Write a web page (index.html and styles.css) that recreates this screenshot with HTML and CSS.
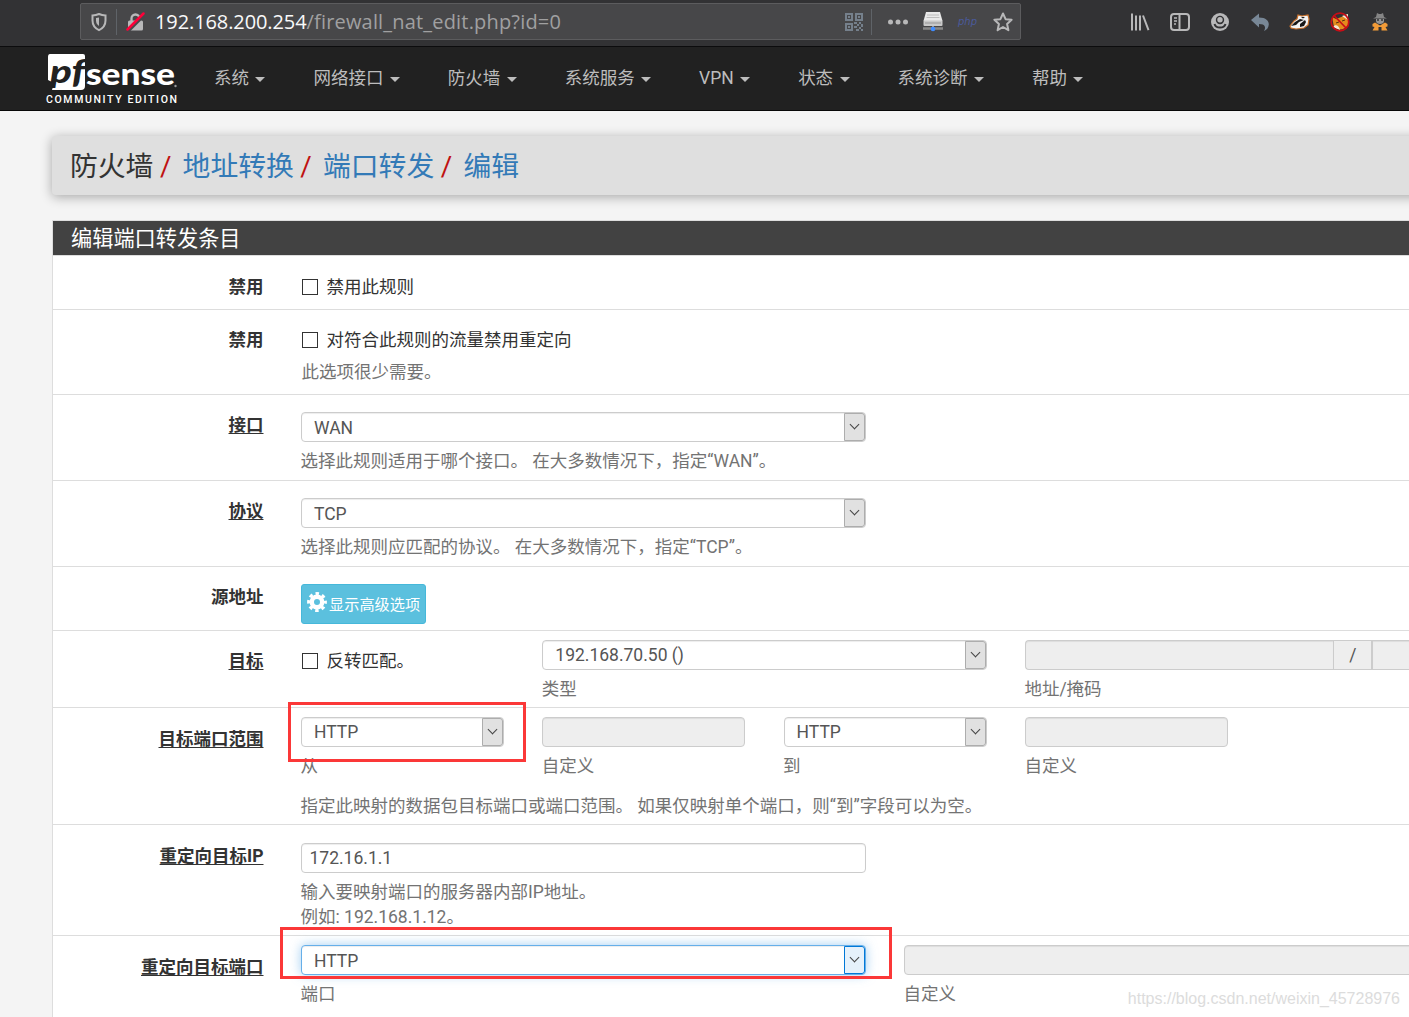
FILE: index.html
```html
<!DOCTYPE html>
<html lang="zh-CN">
  <head>
    <meta charset="UTF-8" />
    <meta name="viewport" content="width=device-width, initial-scale=1.0" />
    <title>防火墙: 地址转换: 端口转发: 编辑</title>
    <link rel="stylesheet" href="styles.css">
  </head>
  <body>
    <!-- Browser toolbar -->
    <div class="toolbar">
      <div class="address-bar">
        <svg class="icon-shield" width="18" height="20" viewBox="0 0 18 20" fill="none" stroke="#b8b8b9" stroke-width="2">
          <path d="M9 2c2 .9 4 1.400 6.500 1.500v5c0 4.500-2 7.500-6.500 9.700C4.500 16 2.500 13 2.500 8.500v-5C5 3.400 7 2.900 9 2z" />
          <path d="M9 5.500v8.500C7 12.500 6 11 6 8.500V6z" fill="#b8b8b9" stroke="none" />
        </svg>
        <span class="divider"></span>
        <svg class="icon-lock" width="19" height="20" viewBox="0 0 19 20">
          <path d="M5.500 9V6.500a4 4 0 0 1 8 0V9" fill="none" stroke="#b8b8b9" stroke-width="2.300" />
          <rect x="2" y="8.500" width="15" height="10" rx="1.500" fill="#b8b8b9" />
          <path d="M1.500 19.500L18.500 2.500" stroke="#474749" stroke-width="3.500" />
          <path d="M1.500 17.500L17.500 1.500" stroke="#ff0039" stroke-width="2.500" stroke-linecap="round" />
        </svg>
        <span class="url"><b>192.168.200.254</b><i>/firewall_nat_edit.php?id=0</i></span>
        <svg class="icon-qr" width="18" height="18" viewBox="0 0 18 18" fill="#75808c">
          <path fill-rule="evenodd" d="M0 0h8v8H0zM2 2v4h4V2zM10 0h8v8h-8zM12 2v4h4V2zM0 10h8v8H0zM2 12v4h4v-4z" />
          <path d="M3 3h2v2H3zM13 3h2v2h-2zM3 13h2v2H3zM9 9h3v2H9zM14 9h2v2h-2zM12 11h2v2h-2zM16 11h2v3h-2zM9 13h3v2H9zM14 14h2v2h-2zM11 16h3v2h-3zM16 16h2v2h-2z" />
        </svg>
        <span class="divider"></span>
        <svg class="icon-more" width="20" height="6" viewBox="0 0 20 6" fill="#b8b8b9">
          <circle cx="2.500" cy="3" r="2.500" /><circle cx="10" cy="3" r="2.500" /><circle cx="17.500" cy="3" r="2.500" />
        </svg>
        <svg class="icon-drive" width="20" height="21" viewBox="0 0 20 21">
          <path d="M3 1h14l2.500 9H.5z" fill="#e9e9e9" />
          <path d="M4 4h12M3.500 6.500h13" stroke="#bcbcbc" />
          <rect x=".5" y="9.500" width="19" height="5.500" rx="1" fill="#c9c9c9" />
          <path d="M2 12h16" stroke="#969696" />
          <path d="M0 17.500h20" stroke="#888" stroke-width="2.500" />
          <path d="M10 15v2" stroke="#999" stroke-width="2" />
          <circle cx="10" cy="18" r="2.300" fill="#3f8cff" />
        </svg>
        <span class="php">php</span>
        <svg class="icon-star" width="20" height="20" viewBox="0 0 20 20" fill="none" stroke="#b8b8b9" stroke-width="2" stroke-linejoin="round">
          <path d="M10 1.500l2.600 5.700 6 .6-4.500 4.200 1.300 6.200-5.400-3.200-5.400 3.200L5.900 12 1.400 7.800l6-.6z" />
        </svg>
      </div>
      <div class="extensions">
        <svg width="20" height="20" viewBox="0 0 20 20" fill="none" stroke="#b8b8b9" stroke-width="2">
          <path d="M2 1.500v17M6 3.500v15M10 3.500v15M13 3.500l5.500 14.700" />
        </svg>
        <svg width="20" height="20" viewBox="0 0 20 20" fill="none" stroke="#b8b8b9" stroke-width="2">
          <rect x="1" y="2" width="18" height="16" rx="3" />
          <path d="M9.500 2v16" />
          <path d="M4 6h3M4 9h3M4 12h2" stroke-width="1.300" />
        </svg>
        <svg width="20" height="20" viewBox="0 0 20 20">
          <circle cx="10" cy="10" r="9" fill="#b8b8b9" />
          <circle cx="10" cy="8" r="4.200" fill="#323234" />
          <circle cx="10" cy="7.800" r="2.700" fill="#b8b8b9" />
          <path d="M4.500 12c1.500 4.800 9.500 4.800 11 0" fill="none" stroke="#323234" stroke-width="2" />
        </svg>
        <svg width="20" height="20" viewBox="0 0 20 20" fill="#788796">
          <path d="M1 8l8-6.500v4c7 0 10 3.500 9.800 7-.2 3.500-2.300 5.500-4.800 6.500 2-3.500 1.500-7-5-7v3.500z" />
        </svg>
        <svg width="22" height="20" viewBox="0 0 22 20">
          <path d="M1 14l4-5 3-2 1-4 4 1 6-1 1 4-1 6-4 3-8 1-5-1z" fill="#f4f4f4" stroke="#c7702b" stroke-width="1.200" />
          <path d="M2 14l4-4 5-3 4 1-5 2-3 3zM11 12l5-4 1 2-2 4-4 1zM12 5l4 0-2 1.500z" fill="#171717" />
        </svg>
        <svg width="20" height="20" viewBox="0 0 20 20">
          <path d="M2 5l4 2 8-3 4-2v11c-3 5-10 6-14 2z" fill="#e48b1d" />
          <path d="M3 15c2-3 6-2 7 3M12 4l6-2v6z" fill="#f5e8d8" />
          <path d="M6 11l3-1M12 9l3-1" stroke="#543011" />
          <circle cx="10" cy="10" r="8.800" fill="none" stroke="#c90d16" stroke-width="1.700" />
          <path d="M4 3.500l12.500 13" stroke="#c90d16" stroke-width="1.700" />
        </svg>
        <svg width="18" height="20" viewBox="0 0 18 20">
          <path d="M5 5l1-4 2 1h2l2-1 1 4 3 1.500H2z" fill="#858585" />
          <path d="M5 7h8v2c0 4-8 4-8 0z" fill="#969696" />
          <path d="M6 8h2M10 8h2" stroke="#333" stroke-width="1.300" />
          <path d="M4 10.500l5 3 5-3 2.500 1.500v2.500L14.500 15l2 3.500H10.500V15h-3v3.500h-6l2-3.500-2-.5V12z" fill="#f29b38" />
        </svg>
      </div>
    </div>

    <!-- Main menu -->
    <nav class="navbar">
      <a class="brand" href="#">
        <svg width="134" height="60" viewBox="0 0 134 60">
          <path d="M6 5h33q2 0 2 2v30q0 4-4 4H8l2-7-6-3V8q0-3 2-3z" fill="#fff" />
          <text class="brand-pf" x="6" y="34" textLength="35" lengthAdjust="spacingAndGlyphs">pf</text>
          <text class="brand-sense" x="42" y="36" textLength="89" lengthAdjust="spacingAndGlyphs">sense</text>
          <circle cx="131.500" cy="37" r="1.200" fill="#999" />
          <text class="brand-edition" x="2" y="54" textLength="131">COMMUNITY EDITION</text>
        </svg>
      </a>
      <ul class="menu">
        <li><a href="#">系统</a></li>
        <li><a href="#">网络接口</a></li>
        <li><a href="#">防火墙</a></li>
        <li><a href="#">系统服务</a></li>
        <li><a href="#">VPN</a></li>
        <li><a href="#">状态</a></li>
        <li><a href="#">系统诊断</a></li>
        <li><a href="#">帮助</a></li>
      </ul>
    </nav>

    <main>
      <ol class="breadcrumb">
        <li>防火墙</li>
        <li><a href="#">地址转换</a></li>
        <li><a href="#">端口转发</a></li>
        <li><a href="#">编辑</a></li>
      </ol>

      <section class="panel">
        <h2>编辑端口转发条目</h2>

        <div class="form-group row-disable">
          <div class="label">禁用</div>
          <div class="field">
            <label class="check"><span class="box"></span>禁用此规则</label>
          </div>
        </div>

        <div class="form-group row-nordr">
          <div class="label">禁用</div>
          <div class="field">
            <label class="check"><span class="box"></span>对符合此规则的流量禁用重定向</label>
            <p class="help indent">此选项很少需要。</p>
          </div>
        </div>

        <div class="form-group row-select">
          <div class="label"><u>接口</u></div>
          <div class="field">
            <div class="select wide">WAN<span class="arrow"></span></div>
            <p class="help">选择此规则适用于哪个接口。 在大多数情况下，指定“WAN”。</p>
          </div>
        </div>

        <div class="form-group row-select">
          <div class="label"><u>协议</u></div>
          <div class="field">
            <div class="select wide">TCP<span class="arrow"></span></div>
            <p class="help">选择此规则应匹配的协议。 在大多数情况下，指定“TCP”。</p>
          </div>
        </div>

        <div class="form-group row-source">
          <div class="label">源地址</div>
          <div class="field">
            <button class="btn-info">
              <svg width="20" height="20" viewBox="0 0 20 20" fill="none" stroke="#fff">
                <circle cx="10" cy="10" r="5.200" stroke-width="4.400" />
                <circle cx="10" cy="10" r="8.300" stroke-width="3.200" stroke-dasharray="3.400 3.118" stroke-dashoffset="1.700" />
              </svg>显示高级选项
            </button>
          </div>
        </div>

        <div class="form-group row-dest">
          <div class="label"><u>目标</u></div>
          <div class="field columns">
            <label class="check"><span class="box"></span>反转匹配。</label>
            <div class="span-2">
              <div class="select">192.168.70.50 ()<span class="arrow"></span></div>
              <p class="help">类型</p>
            </div>
            <div class="span-2">
              <div class="input-group">
                <div class="input disabled"></div>
                <span class="addon">/</span>
                <div class="input disabled mask"></div>
              </div>
              <p class="help">地址/掩码</p>
            </div>
          </div>
        </div>

        <div class="form-group row-range">
          <div class="label"><u>目标端口范围</u></div>
          <div class="field">
            <div class="columns">
              <div>
                <div class="select">HTTP<span class="arrow"></span></div>
                <p class="help">从</p>
              </div>
              <div>
                <div class="input disabled"></div>
                <p class="help">自定义</p>
              </div>
              <div>
                <div class="select">HTTP<span class="arrow"></span></div>
                <p class="help">到</p>
              </div>
              <div>
                <div class="input disabled"></div>
                <p class="help">自定义</p>
              </div>
            </div>
            <p class="help note">指定此映射的数据包目标端口或端口范围。 如果仅映射单个端口，则“到”字段可以为空。</p>
          </div>
          <span class="mark mark-range"></span>
        </div>

        <div class="form-group row-ip">
          <div class="label"><u>重定向目标IP</u></div>
          <div class="field">
            <div class="input wide">172.16.1.1</div>
            <p class="help">输入要映射端口的服务器内部IP地址。<br>例如: 192.168.1.12。</p>
          </div>
        </div>

        <div class="form-group row-port">
          <div class="label"><u>重定向目标端口</u></div>
          <div class="field halves">
            <div>
              <div class="select focus">HTTP<span class="arrow"></span></div>
              <p class="help">端口</p>
            </div>
            <div>
              <div class="input disabled"></div>
              <p class="help">自定义</p>
            </div>
          </div>
          <span class="mark mark-port"></span>
        </div>
      </section>
    </main>
    <div class="watermark">https://blog.csdn.net/weixin_45728976</div>
  </body>
</html>
```
FILE: styles.css
```css
* {
  margin: 0;
  padding: 0;
  box-sizing: border-box;
}
body {
  position: relative;
  height: 1017px;
  overflow: hidden;
  background: #f4f4f4;
  color: #333;
  font-family: Roboto, "Noto Sans CJK SC", sans-serif;
  font-size: 17.5px;
  line-height: 25px;
}
a {
  color: #337ab7;
  text-decoration: none;
}
svg {
  display: block;
  flex: none;
}

/* ================= Browser toolbar ================= */
.toolbar {
  display: flex;
  height: 47px;
  padding: 3px 0 0 80px;
  background: #323234;
  border-bottom: 1px solid #0c0c0d;
}
.address-bar {
  display: flex;
  align-items: center;
  width: 941px;
  height: 37px;
  padding: 0 7px 0 9px;
  background: #474749;
  border: 1px solid #5c5c5e;
  border-radius: 2px;
}
.divider {
  width: 1px;
  height: 26px;
  background: #5f6368;
}
.icon-shield {
  margin-right: 8px;
}
.icon-lock {
  margin: 0 10px 0 9px;
}
.url {
  flex: 1;
  font-family: "Open Sans", "Noto Sans", sans-serif;
  font-size: 20px;
  white-space: nowrap;
}
.url b {
  color: #f9f9fa;
  font-weight: 400;
  letter-spacing: -0.1px;
}
.url i {
  color: #a0a0a1;
  font-style: normal;
  letter-spacing: 0.18px;
}
.icon-qr {
  margin-right: 8px;
}
.icon-more {
  margin: 0 15px 0 16px;
}
.php {
  width: 20px;
  margin: 0 15px;
  color: #4a5a9c;
  font-family: "DejaVu Sans", sans-serif;
  font-size: 10px;
  font-style: italic;
}
.extensions {
  display: grid;
  grid-template-columns: repeat(7, 40px);
  place-items: center;
  height: 37px;
  margin-left: 99px;
}

/* ================= Main menu ================= */
.navbar {
  display: flex;
  height: 64px;
  padding-left: 44px;
  background: #212121;
  border-bottom: 1px solid #080808;
}
.brand {
  margin: 2px 36px 0 0;
}
.brand-pf {
  fill: #212121;
  font: italic 900 33px Lato, sans-serif;
}
.brand-sense {
  fill: #fff;
  font: 900 31px Lato, sans-serif;
}
.brand-edition {
  fill: #fff;
  font: 500 10.500px Roboto, sans-serif;
}
.menu {
  display: flex;
  gap: 48px;
  padding-top: 19px;
  list-style: none;
}
.menu a {
  display: flex;
  align-items: center;
  gap: 6.400px;
  color: #bdbdbd;
}
.menu a::after {
  content: "";
  margin-top: 1px;
  border: 5px solid transparent;
  border-top-color: #bdbdbd;
  border-bottom: 0;
}

/* ================= Page content ================= */
main {
  width: 1447px;
  padding: 25px 0 0 52px;
}
.breadcrumb {
  display: flex;
  height: 59px;
  padding-left: 18px;
  background: #dfdfdf;
  border-radius: 4px;
  box-shadow: 0 2px 12px rgba(0, 0, 0, 0.32);
  font-size: 27.800px;
  line-height: 61px;
  list-style: none;
}
.breadcrumb li + li::before {
  content: "/";
  display: inline-block;
  width: 22.700px;
  padding-left: 6.500px;
  color: #bf1212;
}
.panel {
  margin-top: 25px;
  height: 810px;
  background: #fff;
  border: 1px solid #ddd;
}
.panel h2 {
  height: 35px;
  padding-left: 18px;
  background: #424242;
  border-bottom: 1px solid #ddd;
  color: #fff;
  font-size: 21.200px;
  font-weight: 400;
  line-height: 35px;
}
.form-group {
  position: relative;
  display: flex;
  border-bottom: 1px solid #ddd;
}
.label {
  flex: none;
  width: 210.500px;
  margin-right: 37.500px;
  padding-top: 18px;
  font-weight: 700;
  text-align: right;
}
.label u {
  text-underline-offset: 2px;
}
.row-disable .label,
.row-range .label,
.row-ip .label,
.row-port .label {
  padding-top: 19px;
}
.row-disable {
  height: 54px;
}
.row-nordr {
  height: 85px;
}
.row-select {
  height: 86px;
}
.row-source {
  height: 64px;
}
.row-dest {
  height: 77px;
}
.row-range {
  height: 117px;
}
.row-ip {
  height: 111px;
}
.field {
  padding-top: 18px;
}
.row-select .field,
.row-source .field {
  padding-top: 17px;
}
.row-dest .field,
.row-range .field,
.row-port .field {
  padding-top: 9px;
}
.columns {
  display: grid;
  grid-template-columns: repeat(5, 203px);
  column-gap: 38.300px;
}
.span-2 {
  grid-column: span 2;
}
.halves {
  display: grid;
  grid-template-columns: 565px 565px;
  column-gap: 38px;
}

/* ================= Form controls ================= */
.check {
  display: flex;
  align-items: center;
  gap: 8.500px;
  height: 25px;
  padding-left: 1px;
}
.row-disable .check {
  margin-top: 1px;
}
.row-dest .check {
  margin-top: 9px;
}
.box {
  width: 16px;
  height: 16px;
  margin-bottom: 2px;
  background: #fff;
  border: 1px solid #333;
}
.input,
.select {
  height: 30px;
  padding: 0 7.500px;
  background: #fff;
  border: 1px solid #ccc;
  border-radius: 4px;
  box-shadow: inset 0 1px 1px rgba(0, 0, 0, 0.075);
  color: #555;
  line-height: 28px;
}
.select {
  display: flex;
  justify-content: space-between;
  padding: 0 0 0 12px;
}
.row-select .select,
.row-port .select {
  line-height: 30px;
}
.wide {
  width: 565px;
}
.disabled {
  background: #eee;
}
.arrow {
  display: flex;
  justify-content: center;
  height: 28px;
  width: 21px;
  background: #e1e1e1;
  border: 1px solid #adadad;
  border-radius: 0 3px 3px 0;
}
.arrow::after {
  content: "";
  box-sizing: border-box;
  width: 7px;
  height: 7px;
  margin-top: 7px;
  border: solid #444;
  border-width: 0 1px 1px 0;
  transform: rotate(45deg);
}
.focus {
  border-color: #66afe9;
  box-shadow: inset 0 1px 1px rgba(0, 0, 0, 0.075), 0 0 11px rgba(102, 175, 233, 0.6);
}
.focus .arrow {
  background: #e5f1fb;
  border-color: #0078d7;
}
.help {
  margin-top: 7px;
  margin-left: -0.5px;
  color: #737373;
  white-space: nowrap;
}
.indent {
  padding-left: 1px;
}
.note {
  margin-top: 15px;
}
.input-group {
  display: flex;
}
.input-group .input {
  width: 309px;
  border-right: 0;
  border-radius: 4px 0 0 4px;
}
.addon {
  width: 39px;
  height: 30px;
  background: #eee;
  border: 1px solid #ccc;
  color: #555;
  line-height: 28px;
  text-align: center;
}
.input-group .mask {
  width: 97px;
  border-radius: 0;
}
.btn-info {
  display: flex;
  align-items: center;
  gap: 2px;
  width: 125px;
  height: 40px;
  padding: 0 0 2px 5px;
  background: #5bc0de;
  border: 1px solid #46b8da;
  border-radius: 3px;
  color: #fff;
  font-family: inherit;
  font-size: 15.200px;
  white-space: nowrap;
}
.btn-info svg {
  margin-top: -2px;
}

/* Red frames drawn over the form */
.mark {
  position: absolute;
  border: 3px solid #fb3838;
}
.mark-range {
  top: -6px;
  left: 235px;
  width: 238px;
  height: 60px;
}
.mark-port {
  top: -9px;
  left: 227px;
  width: 612px;
  height: 52px;
}
.row-port {
  border-bottom: 0;
}
.watermark {
  position: absolute;
  right: 9px;
  bottom: 6px;
  color: #dcdcdc;
  font-family: "Liberation Sans", sans-serif;
  font-size: 16px;
}
```
